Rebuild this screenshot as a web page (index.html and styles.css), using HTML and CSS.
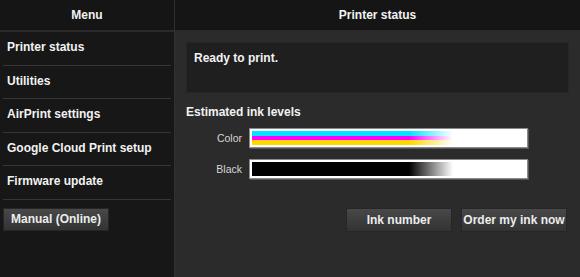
FILE: index.html
```html
<!DOCTYPE html>
<html lang="en">
<head>
  <meta charset="UTF-8" />
  <title>Printer status</title>
  <link rel="stylesheet" href="styles.css">
</head>
<body>
  <div class="menu">
    <div class="menu-title">Menu</div>
    <ul class="menu-list">
      <li>Printer status</li>
      <li>Utilities</li>
      <li>AirPrint settings</li>
      <li>Google Cloud Print setup</li>
      <li>Firmware update</li>
    </ul>
    <button class="btn manual">Manual (Online)</button>
  </div>

  <div class="main">
    <div class="main-title">Printer status</div>
    <div class="content">
      <div class="status-box">Ready to print.</div>

      <h2>Estimated ink levels</h2>
      <div class="ink-row">
        <span class="ink-label">Color</span>
        <div class="ink-bar">
          <div class="stripe cyan"></div>
          <div class="stripe magenta"></div>
          <div class="stripe yellow"></div>
        </div>
      </div>
      <div class="ink-row">
        <span class="ink-label">Black</span>
        <div class="ink-bar">
          <div class="stripe black"></div>
        </div>
      </div>

      <div class="actions">
        <button class="btn">Ink number</button>
        <button class="btn">Order my ink now</button>
      </div>
    </div>
  </div>
</body>
</html>
```

FILE: styles.css
```css
body {
  margin: 0;
  display: flex;
  height: 277px;
  font-family: "Liberation Sans", Arial, sans-serif;
  font-size: 12px;
  font-weight: bold;
  color: #f2f2f2;
  background-color: #2b2b2b;
  overflow: hidden;
}

.menu {
  width: 174px;
  flex: 0 0 174px;
  background-color: #171717;
  border-right: 1px solid #303030;
}

.menu-title,
.main-title {
  height: 30px;
  line-height: 30px;
  text-align: center;
  background-color: #151515;
  border-bottom: 2px solid #2a2a2a;
}

.menu-list {
  list-style-type: none;
  margin: 0;
  padding: 0 3px;
}

.menu-list li {
  height: 32.5px;
  line-height: 31px;
  padding-left: 4px;
  border-bottom: 1px solid #363636;
}

.btn {
  font-family: "Liberation Sans", Arial, sans-serif;
  font-size: 12px;
  font-weight: bold;
  color: #ececec;
  background: linear-gradient(#484848, #333333);
  border: 1px solid #262626;
  padding: 0;
  cursor: pointer;
}

.manual {
  margin: 8px 0 0 3px;
  width: 106px;
  height: 23px;
}

.main {
  flex: 1;
  display: flex;
  flex-direction: column;
}

.content {
  padding: 10px 11px 0 11px;
}

.status-box {
  height: 51px;
  box-sizing: border-box;
  padding: 8px 7px;
  background-color: #1f1f1f;
  border: 1px solid #262626;
}

h2 {
  font-size: 12px;
  margin: 12px 0 9px 0;
}

.ink-row {
  display: flex;
  align-items: center;
  margin-bottom: 11px;
}

.ink-label {
  width: 56px;
  text-align: right;
  margin-right: 7px;
  font-size: 10.5px;
  font-weight: normal;
  color: #d6d6d6;
}

.ink-bar {
  width: 279px;
  height: 20px;
  box-sizing: border-box;
  padding: 2px;
  background-color: #fff;
  border: 1px solid #8a8a8a;
  box-shadow: 1px 1px 0 #555;
}

.stripe {
  width: 100%;
}

.cyan {
  height: 5px;
  background: linear-gradient(to right, #00e4ff 157px, rgba(0, 228, 255, 0) 201px);
}

.magenta {
  height: 4px;
  background: linear-gradient(to right, #ff00ff 157px, rgba(255, 0, 255, 0) 201px);
}

.yellow {
  height: 5px;
  background: linear-gradient(to right, #ffd800 157px, rgba(255, 216, 0, 0) 201px);
}

.black {
  height: 14px;
  background: linear-gradient(to right, #000 157px, rgba(0, 0, 0, 0) 201px);
}

.actions {
  display: flex;
  justify-content: flex-end;
  gap: 9px;
  margin-top: 29px;
  padding-right: 2px;
}

.actions .btn {
  width: 106px;
  height: 24px;
}
```
